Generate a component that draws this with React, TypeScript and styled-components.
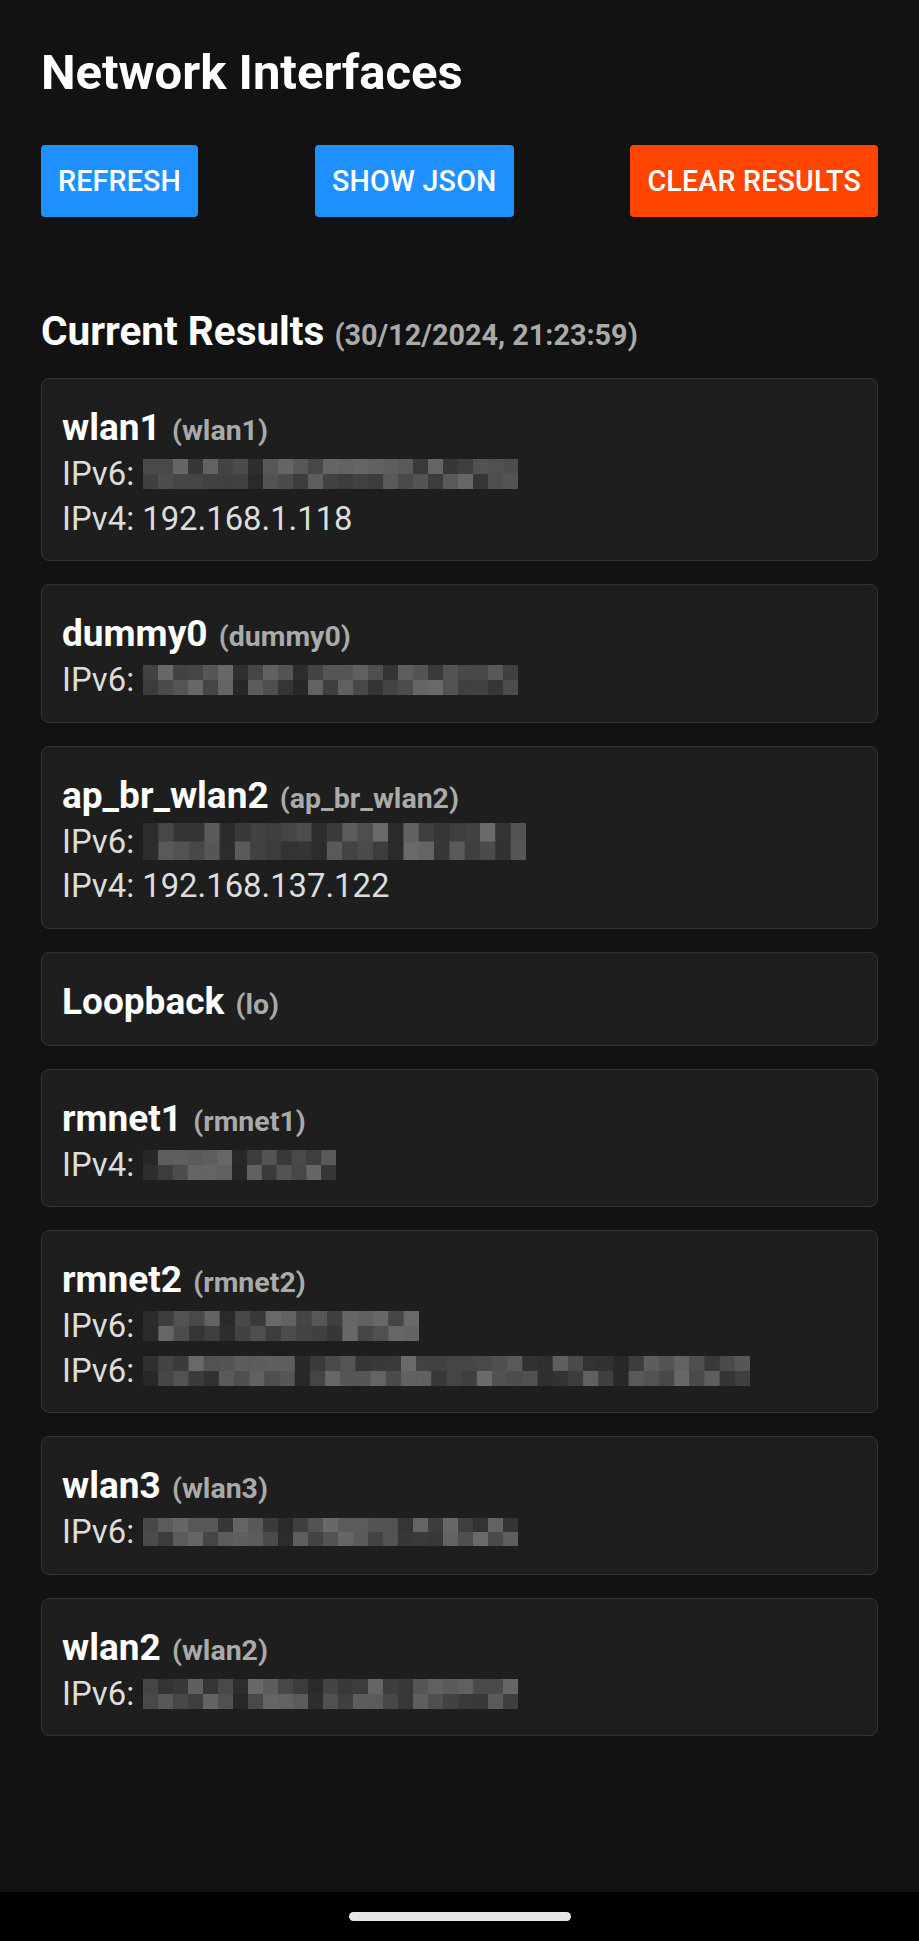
import React from "react";
import styled, { createGlobalStyle } from "styled-components";

const GlobalStyle = createGlobalStyle`
  html, body {
    margin: 0;
    padding: 0;
    background: #121212;
  }
  body {
    font-family: Roboto, "Noto Sans", "Liberation Sans", sans-serif;
  }
  #root {
    min-height: 100vh;
    display: flex;
    flex-direction: column;
  }
`;

const Screen = styled.div`
  flex: 1;
  display: flex;
  flex-direction: column;
  min-height: 100vh;
  background: #121212;
`;

const Main = styled.main`
  flex: 1;
  padding: 44px 41px 0 41px;
  display: flex;
  flex-direction: column;
`;

const Title = styled.h1`
  margin: 0;
  font-size: 49px;
  line-height: 58px;
  font-weight: 700;
  color: #ffffff;
`;

const Toolbar = styled.div`
  margin-top: 43px;
  display: flex;
  justify-content: space-between;
  align-items: center;
`;

const ActionButton = styled.button<{ $tone: "primary" | "danger" }>`
  height: 72px;
  padding: 0 17px;
  border: none;
  border-radius: 4px;
  background: ${(p) => (p.$tone === "danger" ? "#ff4500" : "#1e90ff")};
  color: #ffffff;
  font-family: Roboto, "Noto Sans", sans-serif;
  font-size: 28.6px;
  font-weight: 500;
  letter-spacing: 0.2px;
  text-transform: uppercase;
`;

const Section = styled.section`
  margin-top: 90px;
  display: flex;
  flex-direction: column;
  gap: 23px;
`;

const SectionHeading = styled.h2`
  margin: 0;
  font-size: 40.5px;
  line-height: 48px;
  font-weight: 700;
  color: #ffffff;
`;

const Muted = styled.span`
  font-size: 28.8px;
  line-height: 1;
  font-weight: 700;
  color: #aaaaaa;
`;

const Card = styled.div`
  background: #1e1e1e;
  border: 1px solid #333333;
  border-radius: 8px;
  padding: 24px 20px 19px 20px;
  display: flex;
  flex-direction: column;
`;

const NameLine = styled.div`
  font-size: 37px;
  line-height: 49px;
  font-weight: 700;
  color: #ffffff;
`;

const Alias = styled(Muted)`
  font-size: 28.5px;
  margin-left: 2px;
`;

const AddrRow = styled.div`
  display: flex;
  align-items: center;
  height: 44.5px;
  font-size: 32.8px;
  line-height: 44.5px;
  color: #dddddd;
`;

const AddrLabel = styled.span`
  white-space: pre;
`;

const MosaicSvg = styled.svg`
  display: block;
  margin-left: 9px;
  flex: none;
`;

const NavBar = styled.div`
  height: 49px;
  background: #000000;
  display: flex;
  justify-content: center;
  padding-top: 20px;
  box-sizing: border-box;
`;

const NavHandle = styled.div`
  width: 222px;
  height: 9px;
  border-radius: 5px;
  background: #e6e6e6;
`;

type Mosaic = { w: number; h: number; cols: number; seed: number; gaps?: number[] };
type Addr = { label: string; text?: string; mosaic?: Mosaic };
type Iface = { name: string; id: string; addrs: Addr[] };

function rng(seed: number) {
  let s = (seed * 7919) % 233280;
  return () => {
    s = (s * 9301 + 49297) % 233280;
    return s / 233280;
  };
}

function Pixelated({ m }: { m: Mosaic }) {
  const rand = rng(m.seed);
  const cw = m.w / m.cols;
  const ch = m.h / 2;
  const gaps = new Set(m.gaps ?? []);
  const cells: React.ReactNode[] = [];
  for (let r = 0; r < 2; r++) {
    for (let c = 0; c < m.cols; c++) {
      const v = rand();
      const g = gaps.has(c) ? Math.round(38 + v * 10) : Math.round(50 + v * 56);
      cells.push(
        <rect
          key={`${r}-${c}`}
          x={c * cw}
          y={r * ch}
          width={cw + 0.5}
          height={ch + 0.5}
          fill={`rgb(${g},${g},${g})`}
        />
      );
    }
  }
  return (
    <MosaicSvg width={m.w} height={m.h} viewBox={`0 0 ${m.w} ${m.h}`}>
      {cells}
    </MosaicSvg>
  );
}

const interfaces: Iface[] = [
  {
    name: "wlan1",
    id: "wlan1",
    addrs: [
      { label: "IPv6:", mosaic: { w: 375, h: 30, cols: 25, seed: 3, gaps: [7] } },
      { label: "IPv4: ", text: "192.168.1.118" },
    ],
  },
  {
    name: "dummy0",
    id: "dummy0",
    addrs: [{ label: "IPv6:", mosaic: { w: 375, h: 30, cols: 25, seed: 11, gaps: [6, 10] } }],
  },
  {
    name: "ap_br_wlan2",
    id: "ap_br_wlan2",
    addrs: [
      { label: "IPv6:", mosaic: { w: 383, h: 37, cols: 25, seed: 17, gaps: [0, 5, 11, 16] } },
      { label: "IPv4: ", text: "192.168.137.122" },
    ],
  },
  { name: "Loopback", id: "lo", addrs: [] },
  {
    name: "rmnet1",
    id: "rmnet1",
    addrs: [{ label: "IPv4:", mosaic: { w: 193, h: 30, cols: 13, seed: 23, gaps: [0, 6] } }],
  },
  {
    name: "rmnet2",
    id: "rmnet2",
    addrs: [
      { label: "IPv6:", mosaic: { w: 276, h: 30, cols: 18, seed: 29, gaps: [0, 5] } },
      { label: "IPv6:", mosaic: { w: 607, h: 30, cols: 40, seed: 31, gaps: [0, 10, 26, 31] } },
    ],
  },
  {
    name: "wlan3",
    id: "wlan3",
    addrs: [{ label: "IPv6:", mosaic: { w: 375, h: 28, cols: 25, seed: 37, gaps: [9] } }],
  },
  {
    name: "wlan2",
    id: "wlan2",
    addrs: [{ label: "IPv6:", mosaic: { w: 375, h: 30, cols: 25, seed: 41, gaps: [6, 11] } }],
  },
];

export default function App() {
  return (
    <>
      <GlobalStyle />
      <Screen>
        <Main>
          <Title>Network Interfaces</Title>
          <Toolbar>
            <ActionButton $tone="primary">Refresh</ActionButton>
            <ActionButton $tone="primary">Show JSON</ActionButton>
            <ActionButton $tone="danger">Clear Results</ActionButton>
          </Toolbar>
          <Section>
            <SectionHeading>
              Current Results <Muted>(30/12/2024, 21:23:59)</Muted>
            </SectionHeading>
            {interfaces.map((it) => (
              <Card key={it.name}>
                <NameLine>
                  {it.name} <Alias>({it.id})</Alias>
                </NameLine>
                {it.addrs.map((a, i) => (
                  <AddrRow key={i}>
                    <AddrLabel>{a.label}</AddrLabel>
                    {a.mosaic ? <Pixelated m={a.mosaic} /> : a.text}
                  </AddrRow>
                ))}
              </Card>
            ))}
          </Section>
        </Main>
        <NavBar>
          <NavHandle />
        </NavBar>
      </Screen>
    </>
  );
}
